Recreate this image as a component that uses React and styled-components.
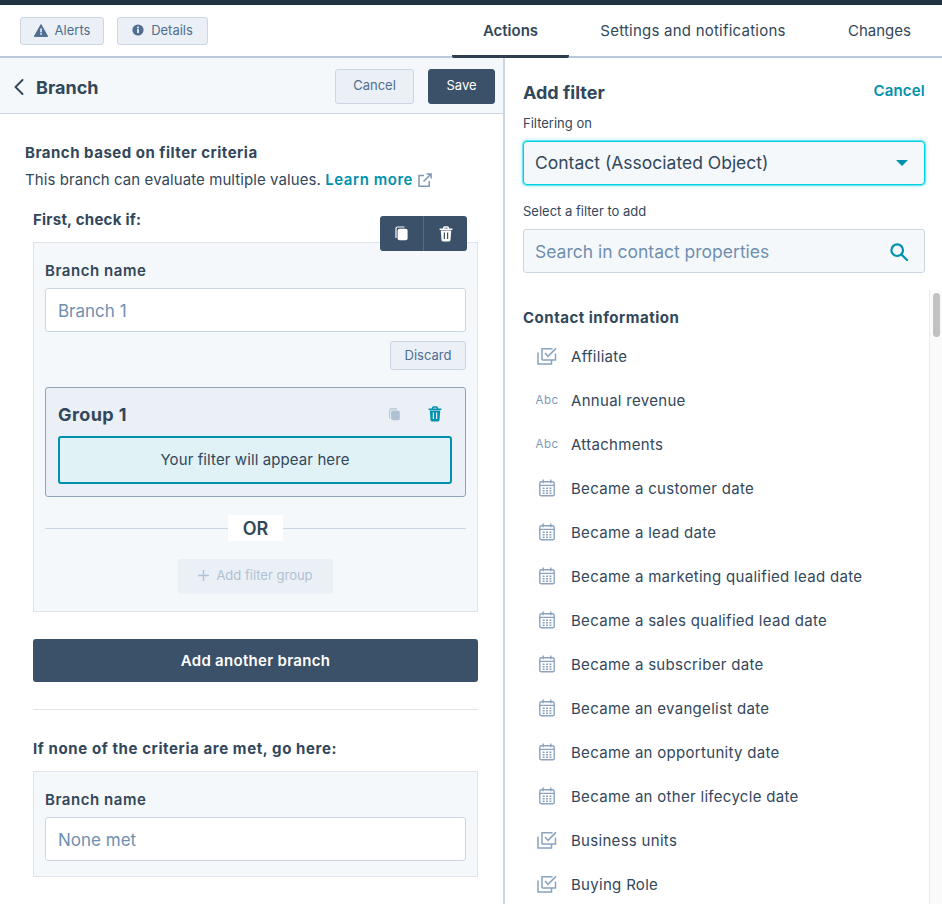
import React from 'react';
import styled, { createGlobalStyle } from 'styled-components';

const GlobalStyle = createGlobalStyle`
  html, body {
    margin: 0;
    padding: 0;
    height: 100%;
    overflow: hidden;
    background: #fff;
  }
  * { box-sizing: border-box; }
  body {
    font-family: Inter, "Noto Sans", "Liberation Sans", sans-serif;
    color: #33475b;
  }
`;

const Page = styled.div`
  width: 942px;
  height: 904px;
  display: flex;
  flex-direction: column;
  overflow: hidden;
  border-top: 5px solid #213343;
`;

const TopBar = styled.div`
  height: 53px;
  flex: none;
  display: flex;
  align-items: center;
  justify-content: space-between;
  padding-left: 20px;
  border-bottom: 2px solid #b9c8da;
`;

const TopActions = styled.div`
  display: flex;
  gap: 13px;
`;

const SmallButton = styled.div`
  height: 28px;
  width: ${(p) => p.$width}px;
  display: flex;
  align-items: center;
  justify-content: center;
  gap: 7px;
  padding-bottom: 1px;
  background: #eaf0f6;
  border: 1px solid #cbd6e2;
  border-radius: 3px;
  color: #506e91;
  font-size: 13px;
`;

const Tabs = styled.div`
  display: flex;
  align-self: stretch;
  margin-bottom: -2px;
`;

const Tab = styled.div`
  display: flex;
  align-items: center;
  justify-content: center;
  width: ${(p) => p.$width}px;
  font-size: 15px;
  letter-spacing: ${(p) => p.$spacing || 0}px;
  font-weight: ${(p) => (p.$active ? 600 : 400)};
  border-bottom: 3px solid ${(p) => (p.$active ? '#2d3e50' : 'transparent')};
  border-radius: 2px;
  padding-top: 1px;
`;

const Body = styled.div`
  flex: 1;
  display: flex;
  min-height: 0;
`;

const LeftPanel = styled.div`
  width: 505px;
  flex: none;
  border-right: 2px solid #cbd6e2;
  display: flex;
  flex-direction: column;
`;

const LeftHeader = styled.div`
  height: 56px;
  flex: none;
  display: flex;
  align-items: center;
  gap: 14px;
  padding: 2px 8px 0 14px;
  background: #f5f8fa;
  border-bottom: 1px solid #cbd6e2;
`;

const BackTitle = styled.div`
  display: flex;
  align-items: center;
  gap: 12px;
  flex: 1;
  margin-top: 1px;
  font-size: 18px;
  font-weight: 700;
`;

const HeaderButton = styled.div`
  height: 35px;
  width: ${(p) => p.$width}px;
  display: flex;
  align-items: center;
  justify-content: center;
  padding-bottom: 4px;
  border-radius: 3px;
  font-size: 13px;
  color: ${(p) => (p.$primary ? '#fff' : '#506e91')};
  background: ${(p) => (p.$primary ? '#3b5069' : '#eaf0f6')};
  border: 1px solid ${(p) => (p.$primary ? '#3b5069' : '#cbd6e2')};
`;

const LeftContent = styled.div`
  padding: 30px 25px 0 25px;
`;

const Heading = styled.div`
  font-size: 15px;
  font-weight: 700;
  line-height: 18px;
  letter-spacing: ${(p) => p.$spacing ?? 0.5}px;
`;

const Description = styled.div`
  display: flex;
  align-items: center;
  margin-top: 8px;
  font-size: 15px;
  line-height: 20px;
  letter-spacing: 0.08px;
  white-space: pre;
`;

const LearnLink = styled.span`
  color: #0091ae;
  font-weight: 600;
  letter-spacing: 0.55px;
  margin-right: 5px;
`;

const Inset = styled.div`
  margin: 0 0 0 8px;
`;

const SubHeading = styled(Heading)`
  margin-top: ${(p) => p.$top}px;
`;

const Card = styled.div`
  position: relative;
  margin-top: ${(p) => p.$top}px;
  padding: 19px 11px ${(p) => p.$bottom}px 11px;
  background: #f5f8fa;
  border: 1px solid #dfe3eb;
`;

const CardTools = styled.div`
  position: absolute;
  top: -27px;
  right: 10px;
  width: 87px;
  height: 35px;
  display: flex;
  background: #3b5069;
  border-radius: 3px;
`;

const CardTool = styled.div`
  flex: 1;
  display: flex;
  align-items: center;
  justify-content: center;
  & + & {
    border-left: 1px solid #506e91;
  }
`;

const FieldLabel = styled.div`
  font-size: 15px;
  font-weight: 600;
  line-height: 18px;
  letter-spacing: 0.55px;
`;

const TextField = styled.div`
  margin-top: 8px;
  height: 44px;
  display: flex;
  align-items: center;
  padding: 2px 12px 0;
  background: #fff;
  border: 1px solid #cbd6e2;
  border-radius: 3px;
  color: #6f8fb0;
  font-size: 17px;
`;

const DiscardRow = styled.div`
  display: flex;
  justify-content: flex-end;
  margin-top: 9px;
`;

const DiscardButton = styled.div`
  width: 76px;
  height: 29px;
  display: flex;
  align-items: center;
  justify-content: center;
  padding-bottom: 2px;
  background: #eaf0f6;
  border: 1px solid #cbd6e2;
  border-radius: 3px;
  color: #506e91;
  font-size: 13px;
`;

const GroupBox = styled.div`
  margin-top: 17px;
  height: 110px;
  padding: 0 13px 0 12px;
  background: #eaf0f6;
  border: 1px solid #8fa3ba;
  border-radius: 3px;
`;

const GroupHeader = styled.div`
  height: 48px;
  display: flex;
  align-items: center;
  justify-content: space-between;
  padding: 5px 10px 0 0;
  font-size: 18px;
  font-weight: 700;
  letter-spacing: 0.4px;
`;

const GroupTools = styled.div`
  display: flex;
  gap: 27px;
  align-items: center;
  margin-top: -1px;
`;

const FilterSlot = styled.div`
  height: 48px;
  display: flex;
  align-items: center;
  justify-content: center;
  padding-bottom: 2px;
  background: #e0f2f6;
  border: 2px solid #0091ae;
  border-radius: 3px;
  font-size: 15px;
  letter-spacing: 0.1px;
`;

const OrRow = styled.div`
  display: flex;
  align-items: center;
  margin-top: 18px;
  &::before, &::after {
    content: '';
    flex: 1;
    height: 1px;
    background: #cbd6e2;
  }
`;

const OrBadge = styled.div`
  width: 55px;
  height: 26px;
  display: flex;
  align-items: center;
  justify-content: center;
  background: #fff;
  font-size: 18px;
  font-weight: 600;
`;

const AddGroupRow = styled.div`
  display: flex;
  justify-content: center;
  margin-top: 18px;
`;

const AddGroupButton = styled.div`
  width: 155px;
  height: 35px;
  display: flex;
  align-items: center;
  justify-content: center;
  gap: 7px;
  padding-bottom: 3px;
  background: #eaf0f6;
  border-radius: 3px;
  color: #b0c1d4;
  font-size: 13px;
`;

const AddBranchButton = styled.div`
  margin-top: 27px;
  height: 43px;
  display: flex;
  align-items: center;
  justify-content: center;
  background: #3b5069;
  border-radius: 3px;
  color: #fff;
  font-size: 15px;
  font-weight: 600;
  letter-spacing: 0.3px;
`;

const Divider = styled.div`
  margin-top: 27px;
  height: 1px;
  background: #dfe3eb;
`;

const RightPanel = styled.div`
  flex: 1;
  min-width: 0;
  display: flex;
  flex-direction: column;
`;

const RightTop = styled.div`
  padding: 24px 17px 0 18px;
`;

const RightTitleRow = styled.div`
  display: flex;
  align-items: center;
  justify-content: space-between;
  height: 20px;
`;

const RightTitle = styled.div`
  font-size: 18px;
  font-weight: 700;
`;

const CancelLink = styled.div`
  margin-top: -3px;
  color: #0091ae;
  font-size: 15px;
  font-weight: 600;
  letter-spacing: 0.2px;
`;

const SmallLabel = styled.div`
  margin-top: ${(p) => p.$top}px;
  font-size: 13px;
  line-height: 16px;
`;

const SelectBox = styled.div`
  margin-top: 10px;
  height: 44px;
  display: flex;
  align-items: center;
  justify-content: space-between;
  padding: 0 16px 1px 11px;
  background: #f5f8fa;
  border: 1px solid #00d0e4;
  border-radius: 4px;
  box-shadow: 0 0 0 1px rgba(0, 208, 228, 0.45), 0 0 4px rgba(0, 208, 228, 0.6);
  font-size: 17.5px;
`;

const Caret = styled.span`
  width: 0;
  height: 0;
  border-left: 6px solid transparent;
  border-right: 6px solid transparent;
  border-top: 6px solid #0091ae;
`;

const SearchBox = styled.div`
  margin-top: 10px;
  height: 44px;
  display: flex;
  align-items: center;
  justify-content: space-between;
  padding: 1px 16px 0 11px;
  background: #f5f8fa;
  border: 1px solid #cbd6e2;
  border-radius: 3px;
  color: #6f8fb0;
  font-size: 17.5px;
`;

const ListArea = styled.div`
  flex: 1;
  min-height: 0;
  margin-top: 17px;
  display: flex;
  overflow: hidden;
`;

const ListColumn = styled.div`
  flex: 1;
  min-width: 0;
  padding: 18px 0 0 18px;
`;

const GroupTitle = styled(Heading)`
  line-height: 20px;
  margin-bottom: 6px;
`;

const PropertyRow = styled.div`
  height: 44px;
  display: flex;
  align-items: center;
  font-size: 15px;
  letter-spacing: 0.3px;
`;

const PropertyIcon = styled.div`
  width: 48px;
  flex: none;
  padding: 0 12px;
  display: flex;
  align-items: center;
  justify-content: center;
`;

const AbcTag = styled.span`
  color: #7c98b6;
  font-size: 11.5px;
  font-weight: 400;
  letter-spacing: 0.5px;
`;

const ScrollTrack = styled.div`
  width: 13px;
  flex: none;
  padding: 3px 2px 0 3px;
  background: #fafafa;
  border-left: 1px solid #ececec;
`;

const ScrollThumb = styled.div`
  height: 44px;
  background: #c1c1c1;
  border-radius: 4px;
`;

const AlertIcon = () => (
  <svg width="14" height="13" viewBox="0 0 14 13">
    <path d="M7 .6 13.7 12.4H.3z" fill="#506e91" stroke="#506e91" strokeLinejoin="round" />
    <rect x="6.2" y="4.4" width="1.6" height="4" fill="#eaf0f6" />
    <rect x="6.2" y="9.2" width="1.6" height="1.6" fill="#eaf0f6" />
  </svg>
);

const InfoIcon = () => (
  <svg width="12" height="12" viewBox="0 0 12 12">
    <circle cx="6" cy="6" r="5.6" fill="#506e91" />
    <rect x="5.1" y="5.1" width="1.8" height="4" fill="#eaf0f6" />
    <rect x="5.1" y="2.6" width="1.8" height="1.7" fill="#eaf0f6" />
  </svg>
);

const BackIcon = () => (
  <svg width="10" height="16" viewBox="0 0 10 16">
    <path d="M8.5 1 1.5 8l7 7" fill="none" stroke="#33475b" strokeWidth="1.9" strokeLinecap="round" strokeLinejoin="round" />
  </svg>
);

const ExternalIcon = () => (
  <svg width="14" height="14" viewBox="0 0 14 14" fill="none" stroke="#7c98b6" strokeWidth="1.5">
    <path d="M6 2.5H1v10.7h10.2V8" />
    <path d="M5.5 8.5 13 1M8.5.9h4.6v4.6" />
  </svg>
);

const CopyIcon = ({ color, size = 15 }) => (
  <svg width={size} height={size} viewBox="0 0 15 15">
    <path d="M2 11.5V2.5A1.5 1.5 0 0 1 3.5 1H10" fill="none" stroke={color} strokeWidth="1.2" strokeLinecap="round" />
    <rect x="3.6" y="2.8" width="10" height="11.4" rx="2" fill={color} />
  </svg>
);

const TrashIcon = ({ color, gap }) => (
  <svg width="14" height="16" viewBox="0 0 14 16">
    <path d="M.6 3.2h12.8M4.6 3V2A1 1 0 0 1 5.6 1h2.8a1 1 0 0 1 1 1v1" fill="none" stroke={color} strokeWidth="1.5" />
    <path d="M1.8 4.6h10.4l-.7 9.4a1.5 1.5 0 0 1-1.5 1.4H4a1.5 1.5 0 0 1-1.5-1.4z" fill={color} />
    <path d="M5.4 6.6v6.4M8.6 6.6v6.4" stroke={gap} strokeWidth="1.2" />
  </svg>
);

const PlusIcon = () => (
  <svg width="11" height="11" viewBox="0 0 11 11">
    <path d="M5.5 0v11M0 5.5h11" stroke="#b0c1d4" strokeWidth="1.4" />
  </svg>
);

const SearchIcon = () => (
  <svg width="18" height="18" viewBox="0 0 18 18" fill="none" stroke="#0091ae" strokeWidth="2.2">
    <circle cx="7.2" cy="7.2" r="5.8" />
    <path d="M11.5 11.5 17 17" strokeLinecap="round" />
  </svg>
);

const MultiCheckIcon = () => (
  <svg width="20" height="18" viewBox="0 0 20 18" fill="none" stroke="#8ba3bf" strokeWidth="1.5">
    <path d="M5 13V1.8H15.5" />
    <path d="M18.5 6.5V13H5" />
    <path d="M1 5.5V17H14.5V13" />
    <path d="M8 6 11 9.4 19 1.4" strokeWidth="1.6" />
  </svg>
);

const CalendarIcon = () => (
  <svg width="16" height="18" viewBox="0 0 16 18" fill="none" stroke="#8ba3bf" strokeWidth="1.4">
    <rect x=".8" y="2.8" width="14.4" height="14" rx="1.6" />
    <path d="M.8 6.4h14.4M4.2.6v3.6M11.8.6v3.6" />
    <path d="M3.6 9.3h2M7 9.3h2M10.4 9.3h2M3.6 11.8h2M7 11.8h2M10.4 11.8h2M3.6 14.3h2M7 14.3h2M10.4 14.3h2" strokeWidth="1.5" />
  </svg>
);

const properties = [
  { label: 'Affiliate', kind: 'check' },
  { label: 'Annual revenue', kind: 'text' },
  { label: 'Attachments', kind: 'text' },
  { label: 'Became a customer date', kind: 'date' },
  { label: 'Became a lead date', kind: 'date' },
  { label: 'Became a marketing qualified lead date', kind: 'date' },
  { label: 'Became a sales qualified lead date', kind: 'date' },
  { label: 'Became a subscriber date', kind: 'date' },
  { label: 'Became an evangelist date', kind: 'date' },
  { label: 'Became an opportunity date', kind: 'date' },
  { label: 'Became an other lifecycle date', kind: 'date' },
  { label: 'Business units', kind: 'check' },
  { label: 'Buying Role', kind: 'check' },
];

const KindIcon = ({ kind }) => {
  if (kind === 'check') return <MultiCheckIcon />;
  if (kind === 'text') return <AbcTag>Abc</AbcTag>;
  return <CalendarIcon />;
};

const App = () => {
  return (
    <Page>
      <GlobalStyle />
      <TopBar>
        <TopActions>
          <SmallButton $width={84}><AlertIcon />Alerts</SmallButton>
          <SmallButton $width={91}><InfoIcon />Details</SmallButton>
        </TopActions>
        <Tabs>
          <Tab $active $width={117}>Actions</Tab>
          <Tab $width={248} $spacing={0.23}>Settings and notifications</Tab>
          <Tab $width={125}>Changes</Tab>
        </Tabs>
      </TopBar>
      <Body>
        <LeftPanel>
          <LeftHeader>
            <BackTitle><BackIcon />Branch</BackTitle>
            <HeaderButton $width={79}>Cancel</HeaderButton>
            <HeaderButton $primary $width={67}>Save</HeaderButton>
          </LeftHeader>
          <LeftContent>
            <Heading>Branch based on filter criteria</Heading>
            <Description>
              This branch can evaluate multiple values. <LearnLink>Learn more</LearnLink><ExternalIcon />
            </Description>
            <Inset>
              <SubHeading $top={21} $spacing={0.25}>First, check if:</SubHeading>
              <Card $top={13} $bottom={17}>
                <CardTools>
                  <CardTool><CopyIcon color="#fff" /></CardTool>
                  <CardTool><TrashIcon color="#fff" gap="#3b5069" /></CardTool>
                </CardTools>
                <FieldLabel>Branch name</FieldLabel>
                <TextField>Branch 1</TextField>
                <DiscardRow><DiscardButton>Discard</DiscardButton></DiscardRow>
                <GroupBox>
                  <GroupHeader>
                    Group 1
                    <GroupTools>
                      <CopyIcon color="#b0c1d4" size={13} />
                      <TrashIcon color="#0091ae" gap="#eaf0f6" />
                    </GroupTools>
                  </GroupHeader>
                  <FilterSlot>Your filter will appear here</FilterSlot>
                </GroupBox>
                <OrRow><OrBadge>OR</OrBadge></OrRow>
                <AddGroupRow>
                  <AddGroupButton><PlusIcon />Add filter group</AddGroupButton>
                </AddGroupRow>
              </Card>
              <AddBranchButton>Add another branch</AddBranchButton>
              <Divider />
              <SubHeading $top={30} $spacing={0.6}>If none of the criteria are met, go here:</SubHeading>
              <Card $top={13} $bottom={15}>
                <FieldLabel>Branch name</FieldLabel>
                <TextField>None met</TextField>
              </Card>
            </Inset>
          </LeftContent>
        </LeftPanel>
        <RightPanel>
          <RightTop>
            <RightTitleRow>
              <RightTitle>Add filter</RightTitle>
              <CancelLink>Cancel</CancelLink>
            </RightTitleRow>
            <SmallLabel $top={13}>Filtering on</SmallLabel>
            <SelectBox>Contact (Associated Object)<Caret /></SelectBox>
            <SmallLabel $top={18}>Select a filter to add</SmallLabel>
            <SearchBox>Search in contact properties<SearchIcon /></SearchBox>
          </RightTop>
          <ListArea>
            <ListColumn>
              <GroupTitle>Contact information</GroupTitle>
              {properties.map((item) => (
                <PropertyRow key={item.label}>
                  <PropertyIcon><KindIcon kind={item.kind} /></PropertyIcon>
                  {item.label}
                </PropertyRow>
              ))}
            </ListColumn>
            <ScrollTrack><ScrollThumb /></ScrollTrack>
          </ListArea>
        </RightPanel>
      </Body>
    </Page>
  );
};

export default App;
